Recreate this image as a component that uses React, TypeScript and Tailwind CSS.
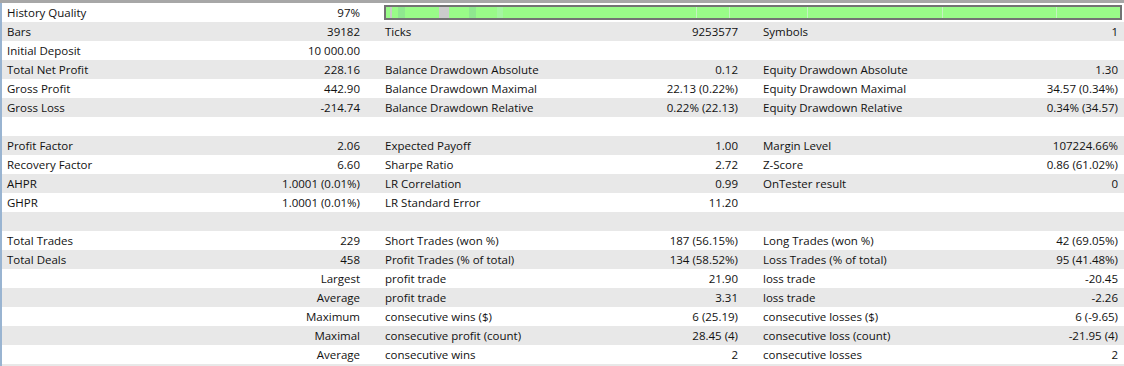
import React from "react";

type Cell = [string, string];
type Row = Cell[];

const rows: Row[] = [
  [["Bars", "39182"], ["Ticks", "9253577"], ["Symbols", "1"]],
  [["Initial Deposit", "10 000.00"], ["", ""], ["", ""]],
  [["Total Net Profit", "228.16"], ["Balance Drawdown Absolute", "0.12"], ["Equity Drawdown Absolute", "1.30"]],
  [["Gross Profit", "442.90"], ["Balance Drawdown Maximal", "22.13 (0.22%)"], ["Equity Drawdown Maximal", "34.57 (0.34%)"]],
  [["Gross Loss", "-214.74"], ["Balance Drawdown Relative", "0.22% (22.13)"], ["Equity Drawdown Relative", "0.34% (34.57)"]],
  [["", ""], ["", ""], ["", ""]],
  [["Profit Factor", "2.06"], ["Expected Payoff", "1.00"], ["Margin Level", "107224.66%"]],
  [["Recovery Factor", "6.60"], ["Sharpe Ratio", "2.72"], ["Z-Score", "0.86 (61.02%)"]],
  [["AHPR", "1.0001 (0.01%)"], ["LR Correlation", "0.99"], ["OnTester result", "0"]],
  [["GHPR", "1.0001 (0.01%)"], ["LR Standard Error", "11.20"], ["", ""]],
  [["", ""], ["", ""], ["", ""]],
  [["Total Trades", "229"], ["Short Trades (won %)", "187 (56.15%)"], ["Long Trades (won %)", "42 (69.05%)"]],
  [["Total Deals", "458"], ["Profit Trades (% of total)", "134 (58.52%)"], ["Loss Trades (% of total)", "95 (41.48%)"]],
  [["", "Largest"], ["profit trade", "21.90"], ["loss trade", "-20.45"]],
  [["", "Average"], ["profit trade", "3.31"], ["loss trade", "-2.26"]],
  [["", "Maximum"], ["consecutive wins ($)", "6 (25.19)"], ["consecutive losses ($)", "6 (-9.65)"]],
  [["", "Maximal"], ["consecutive profit (count)", "28.45 (4)"], ["consecutive loss (count)", "-21.95 (4)"]],
  [["", "Average"], ["consecutive wins", "2"], ["consecutive losses", "2"]],
];

// history quality strip: [x, width, colour] relative to bar inner area
const marks: [number, number, string][] = [
  [4, 2, "#c9c9c9"],
  [12, 7, "#8fe88f"],
  [53, 10, "#cbcbcb"],
  [83, 7, "#8fe88f"],
  [111, 6, "#a4f7a0"],
  [310, 1, "#c4f2c0"],
  [343, 1, "#c4f2c0"],
  [421, 1, "#c4f2c0"],
  [556, 1, "#c4f2c0"],
  [670, 1, "#c4f2c0"],
];

function Pair({ cell, last }: { cell: Cell; last?: boolean }) {
  return (
    <div className={`flex ${last ? "flex-1 pr-[6px]" : "w-[378px] pr-[20px]"} pl-[5px]`}>
      <span className="flex-1 whitespace-nowrap">{cell[0]}</span>
      <span className="whitespace-nowrap text-right">{cell[1]}</span>
    </div>
  );
}

export default function App() {
  return (
    <div
      className="w-[1124px] h-[366px] overflow-hidden bg-white text-[11.5px] text-[#111] border-t-[3px] border-[#a7a7a7]"
      style={{ fontFamily: '"Open Sans", "Noto Sans", sans-serif' }}
    >
      <div className="border-l-2 border-[#99b4d1] h-full">
        <div className="flex h-[19px] items-center bg-white">
          <Pair cell={["History Quality", "97%"]} />
          <div className="flex-1 pl-[4px] pr-[2px] h-full py-[2px]">
            <div className="relative h-full border-2 border-[#737373] bg-[#99fb88]">
              {marks.map(([x, w, c], i) => (
                <div
                  key={i}
                  className="absolute top-0 bottom-0"
                  style={{ left: x, width: w, background: c }}
                />
              ))}
            </div>
          </div>
        </div>
        {rows.map((r, i) => (
          <div
            key={i}
            className={`flex h-[19px] items-center ${i % 2 === 0 ? "bg-[#e8e8e8]" : "bg-white"}`}
          >
            <Pair cell={r[0]} />
            <Pair cell={r[1]} />
            <Pair cell={r[2]} last />
          </div>
        ))}
        <div className="h-[19px] bg-[#e8e8e8]" />
      </div>
    </div>
  );
}
